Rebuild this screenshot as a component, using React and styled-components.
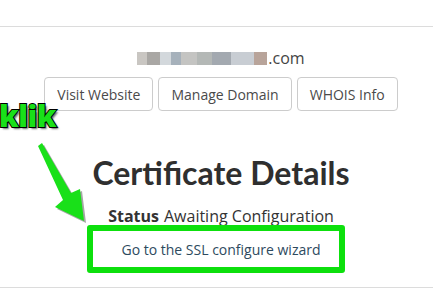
import styled, { createGlobalStyle } from "styled-components";

const Global = createGlobalStyle`
  body {
    margin: 0;
    background: #ffffff;
    font-family: "Open Sans", "Liberation Sans", sans-serif;
    color: #333;
  }
`;

const Page = styled.div`
  position: relative;
  width: 433px;
  height: 303px;
  overflow: hidden;
  padding-top: 26px;
  box-sizing: border-box;
`;

const Rule = styled.div`
  height: 1px;
  background: #dcdcdc;
`;

const Content = styled.div`
  display: flex;
  flex-direction: column;
  align-items: center;
  padding-left: 9px;
  height: 260px;
`;

const Domain = styled.div`
  margin-top: 21px;
  display: flex;
  align-items: center;
  font-size: 16px;
  line-height: 20px;
  color: #444;
`;

const Blur = styled.span`
  display: inline-block;
  width: 130px;
  height: 13px;
  margin-right: 1px;
  background: linear-gradient(
    90deg,
    #c9c6c2 0 8%,
    #a9a7a4 8% 18%,
    #d3d8dc 18% 26%,
    #a6b1bb 26% 34%,
    #c4c4c2 34% 46%,
    #b4b8b6 46% 58%,
    #a3a9b0 58% 72%,
    #c8cdd3 72% 90%,
    #b8a49a 90% 100%
  );
  filter: blur(0.6px);
`;

const Buttons = styled.div`
  margin-top: 9px;
  display: flex;
  gap: 5px;
`;

const Button = styled.button`
  height: 34px;
  padding: 0 12px;
  background: #fff;
  border: 1px solid #cccccc;
  border-radius: 4px;
  font-family: "Open Sans", "Liberation Sans", sans-serif;
  font-size: 14px;
  color: #4a4a4a;
`;

const Heading = styled.h1`
  margin: 44px 0 0;
  font-family: Lato, "Open Sans", sans-serif;
  font-weight: 700;
  font-size: 32px;
  line-height: 36px;
  color: #2f2f2f;
`;

const Status = styled.div`
  margin-top: 15px;
  font-size: 16px;
  line-height: 20px;
  color: #333;

  & b {
    font-weight: 700;
    margin-right: 5px;
  }
`;

const Highlight = styled.div`
  margin-top: -1px;
  margin-left: -10px;
  width: 258px;
  height: 48px;
  box-sizing: border-box;
  border: 6px solid #0de00d;
  border-radius: 3px;
  display: flex;
  align-items: center;
  justify-content: center;
  padding-left: 10px;
`;

const Link = styled.a`
  font-size: 14px;
  color: #2d4a5e;
  text-decoration: none;
`;

const Klik = styled.div`
  position: absolute;
  left: -1px;
  top: 95px;
  font-family: "Open Sans", sans-serif;
  font-weight: 800;
  font-size: 30px;
  color: #19e019;
  -webkit-text-stroke: 2px #000;
  paint-order: stroke fill;
  text-shadow: 2px 2px 2px rgba(0, 0, 0, 0.6);
  letter-spacing: -0.5px;
`;

const Arrow = styled.svg`
  position: absolute;
  left: 0;
  top: 0;
  pointer-events: none;
`;

export default function App() {
  return (
    <Page>
      <Global />
      <Rule />
      <Content>
        <Domain>
          <Blur />
          .com
        </Domain>
        <Buttons>
          <Button>Visit Website</Button>
          <Button>Manage Domain</Button>
          <Button>WHOIS Info</Button>
        </Buttons>
        <Heading>Certificate Details</Heading>
        <Status>
          <b>Status</b>Awaiting Configuration
        </Status>
        <Highlight>
          <Link href="#">Go to the SSL configure wizard</Link>
        </Highlight>
      </Content>
      <Rule />
      <Klik>klik</Klik>
      <Arrow width="433" height="303" viewBox="0 0 433 303">
        <polygon
          points="38,146 42,143 71,193 80,189 84,221 55,207 63,200"
          fill="rgba(0,0,0,0.35)"
          transform="translate(2,2)"
        />
        <polygon
          points="38,146 42,143 71,193 80,189 84,221 55,207 63,200"
          fill="#19e019"
        />
      </Arrow>
    </Page>
  );
}
